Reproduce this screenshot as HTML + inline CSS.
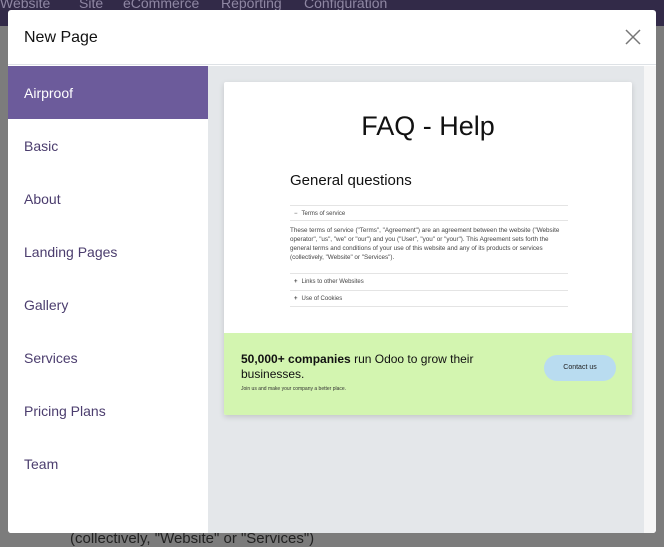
<!DOCTYPE html>
<html><head><style>
*{margin:0;padding:0;box-sizing:border-box}
body{width:664px;height:543px;overflow:hidden;background:#7c7c7c;font-family:"Liberation Sans",sans-serif;position:relative}
.top{position:absolute;left:0;top:0;width:664px;height:26px;background:#322a48;color:#8f87a3;font-size:14px}
.top span{position:absolute;top:-5px}
.bt{position:absolute;left:70px;top:530px;font-size:15px;color:#222}
.modal{position:absolute;left:8px;top:10px;width:648px;height:523px;background:#fff;border-radius:3px;overflow:hidden}
.hd{height:55px;border-bottom:1px solid #dee2e6;position:relative}
.hd h1{font-size:16px;font-weight:normal;position:absolute;left:16px;top:19px;color:#111}
.side{position:absolute;left:0;top:56px;width:200px;bottom:0;background:#fff}
.side div{height:53px;line-height:55px;padding-left:16px;font-size:14px;color:#4b3d6e}
.side .a{background:#6c5b9b;color:#fff}
.main{position:absolute;left:200px;top:56px;width:436px;bottom:0;background:#e4e7ea}
.sb{position:absolute;left:636px;top:56px;width:12px;bottom:0;background:#f6f6f6}
.card{position:absolute;left:16px;top:16px;width:408px;height:333px;background:#fff;box-shadow:0 2px 6px rgba(0,0,0,.15);border-radius:2px;overflow:hidden}
.faq{position:absolute;top:29px;width:100%;text-align:center;font-size:27px;color:#111}
.gq{position:absolute;left:66px;top:90px;font-size:15px;color:#111}
.acc{position:absolute;left:66px;width:278px;font-size:6px;color:#444;border-top:1px solid #e4e4e4}
.grn{position:absolute;left:0;top:251px;width:100%;height:82px;background:#d3f5b0}
.grn .t{position:absolute;left:17px;top:19px;font-size:12px;color:#111;line-height:15px;width:280px}
.grn .s{position:absolute;left:17px;top:53px;font-size:5px;color:#333}
.btn{position:absolute;left:320px;top:22px;width:72px;height:26px;border-radius:13px;background:#b9dcf0;font-size:7px;text-align:center;line-height:26px;color:#222}
</style></head><body>
<div class="top"><span style="left:0">Website</span><span style="left:79px">Site</span><span style="left:123px">eCommerce</span><span style="left:221px">Reporting</span><span style="left:304px">Configuration</span></div>
<div class="bt">(collectively, "Website" or "Services")</div>
<div class="modal">
<div class="hd"><h1>New Page</h1>
<svg style="position:absolute;left:617px;top:19px" width="16" height="16"><path d="M1 1L15 15M15 1L1 15" stroke="#777" stroke-width="1.5"/></svg></div>
<div class="side"><div class="a">Airproof</div><div>Basic</div><div>About</div><div>Landing Pages</div><div>Gallery</div><div>Services</div><div>Pricing Plans</div><div>Team</div></div>
<div class="main">
<div class="card">
<div class="faq">FAQ - Help</div>
<div class="gq">General questions</div>
<div class="acc" style="top:123px;height:16px;line-height:16px;border-bottom:1px solid #e4e4e4"><b style="font-weight:normal;margin:0 4px">−</b>Terms of service</div>
<div class="acc" style="top:144px;border:0;line-height:9px;font-size:6.3px">These terms of service ("Terms", "Agreement") are an agreement between the website ("Website operator", "us", "we" or "our") and you ("User", "you" or "your"). This Agreement sets forth the general terms and conditions of your use of this website and any of its products or services (collectively, "Website" or "Services").</div>
<div class="acc" style="top:191px;height:17px;line-height:17px"><b style="margin:0 4px">+</b>Links to other Websites</div>
<div class="acc" style="top:208px;height:17px;line-height:17px;border-bottom:1px solid #e4e4e4"><b style="margin:0 4px">+</b>Use of Cookies</div>
<div class="grn"><div class="t"><b>50,000+ companies</b> run Odoo to grow their businesses.</div><div class="s">Join us and make your company a better place.</div><div class="btn">Contact us</div></div>
</div>
</div>
<div class="sb"></div>
</div>
</body></html>
